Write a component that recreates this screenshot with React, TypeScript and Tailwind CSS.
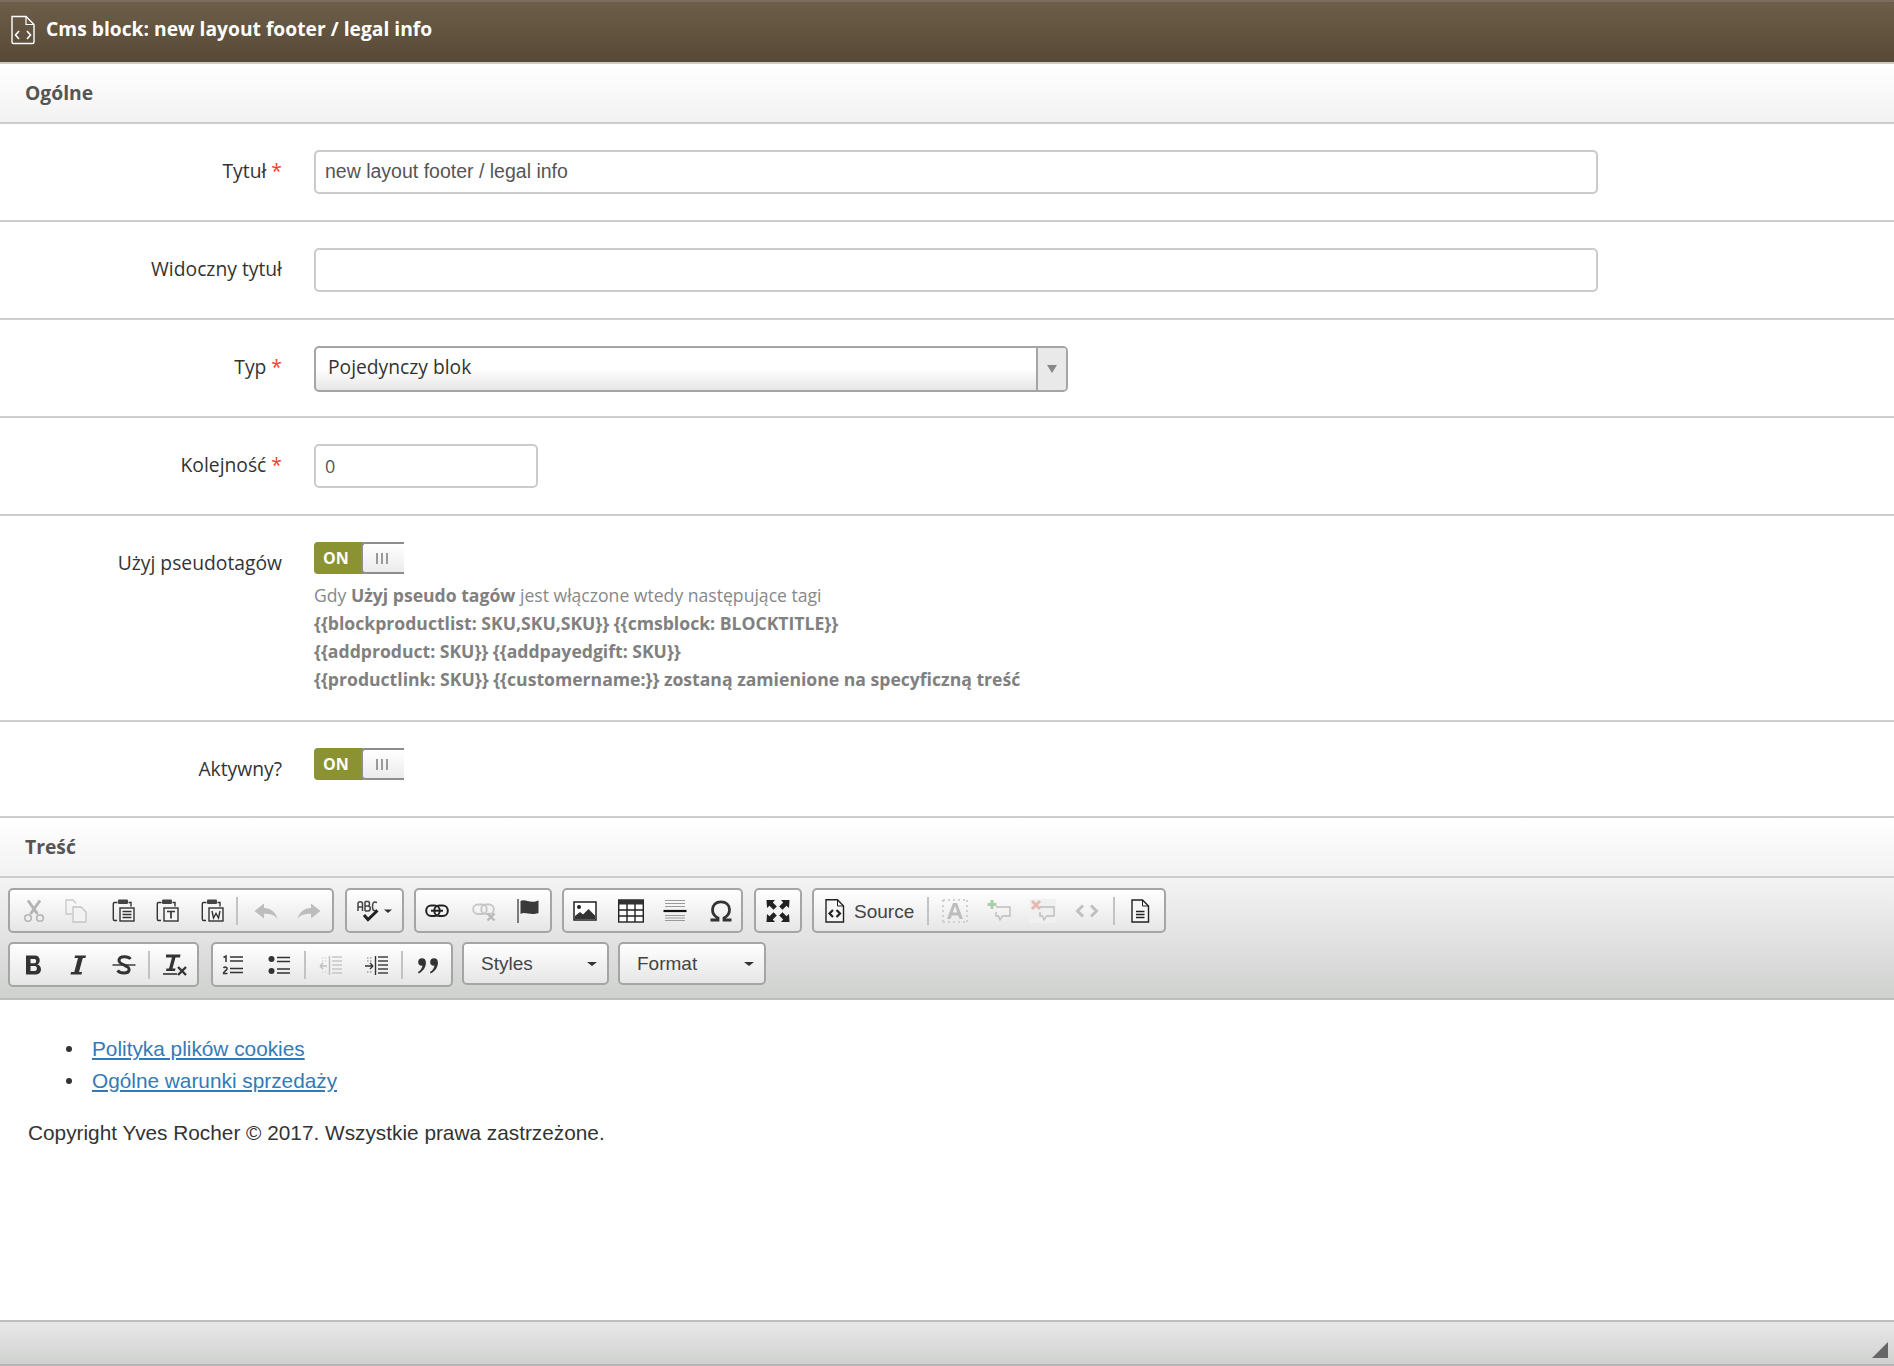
import React from "react";

const OS = "font-['Open_Sans',sans-serif]";
const LS = "font-['Liberation_Sans',Arial,sans-serif]";

const Svg = ({ children, w = 24 }: { children: React.ReactNode; w?: number }) => (
  <svg width={w} height="24" viewBox={`0 0 ${w} 24`} fill="none" className="block">
    {children}
  </svg>
);

const Clip = ({ children }: { children?: React.ReactNode }) => (
  <Svg>
    <path d="M5.5 3.5H2.5C1.5 3.5 1.3 4 1.3 5V20C1.3 21 1.5 21.5 2.5 21.5H5" stroke="#333" strokeWidth="1.4" />
    <path d="M16.5 3.5H19V7.5" stroke="#333" strokeWidth="1.4" />
    <rect x="6" y="0.5" width="10" height="4.5" rx="1" fill="#444" />
    {children}
  </Svg>
);

const icons: Record<string, React.ReactNode> = {
  cut: (
    <Svg>
      <path d="M6 1.5L15.5 15M18 1.5L8.5 15" stroke="#b4b4b4" strokeWidth="3" />
      <circle cx="6" cy="19" r="3.3" stroke="#b4b4b4" strokeWidth="1.6" />
      <circle cx="18" cy="19" r="3.3" stroke="#b4b4b4" strokeWidth="1.6" />
    </Svg>
  ),
  copy: (
    <Svg>
      <path d="M8 15H2V1H9L12 4.5" stroke="#c8c8c8" strokeWidth="1.3" />
      <path d="M9 8H17L22 13V23H9Z" stroke="#c4c4c4" strokeWidth="1.3" fill="#f2f2f2" />
    </Svg>
  ),
  paste: (
    <Clip>
      <rect x="8" y="9" width="14" height="13" stroke="#333" strokeWidth="1.4" fill="#f4f4f4" />
      <path d="M10.5 12.5H19.5M10.5 15.5H19.5M10.5 18.5H19.5" stroke="#333" strokeWidth="1.4" />
    </Clip>
  ),
  pasteT: (
    <Clip>
      <rect x="8" y="9" width="14" height="13" stroke="#333" strokeWidth="1.4" fill="#f4f4f4" />
      <path d="M11 12.5H19M15 12.5V19.5" stroke="#333" strokeWidth="1.7" />
    </Clip>
  ),
  pasteW: (
    <Clip>
      <rect x="8" y="9" width="14" height="13" stroke="#333" strokeWidth="1.4" fill="#f4f4f4" />
      <path d="M11 12L12.5 19L15 14.5L17.5 19L19 12" stroke="#333" strokeWidth="1.4" />
    </Clip>
  ),
  undo: (
    <Svg>
      <path d="M0.5 12L10 4.5V9C17 9 21.5 13 23.5 20C20 15.5 16 14.8 10 14.8V19.5Z" fill="#bdbdbd" />
    </Svg>
  ),
  redo: (
    <Svg>
      <path d="M23.5 12L14 4.5V9C7 9 2.5 13 0.5 20C4 15.5 8 14.8 14 14.8V19.5Z" fill="#bdbdbd" />
    </Svg>
  ),
  spell: (
    <Svg w={36}>
      <path d="M1 12V4.5C1 2 5.5 2 5.5 4.5V12M1 8H5.5" stroke="#444" strokeWidth="1.5" />
      <path d="M8 2.5V12M8 2.5H11C13 2.5 13 7 11 7H8M11 7C14 7 14 12 11 12H8" stroke="#444" strokeWidth="1.5" />
      <path d="M20 3.5C16 1.5 15.5 5 15.5 7.5C15.5 10 16 13 20 11" stroke="#444" strokeWidth="1.5" />
      <path d="M7 16L11 20.5L20.5 11.5" stroke="#222" strokeWidth="3" />
      <path d="M27 10.5H35L31 14Z" fill="#333" />
    </Svg>
  ),
  link: (
    <Svg>
      <rect x="1.2" y="6.5" width="13.5" height="10.5" rx="5" stroke="#222" strokeWidth="2" />
      <rect x="9.3" y="6.5" width="13.5" height="10.5" rx="5" stroke="#222" strokeWidth="2" />
      <path d="M6 11.7H18" stroke="#222" strokeWidth="2" />
    </Svg>
  ),
  unlink: (
    <Svg>
      <rect x="1.2" y="5.5" width="13.5" height="9.5" rx="4.5" stroke="#c6c6c6" strokeWidth="1.8" />
      <rect x="9.3" y="5.5" width="12.5" height="9.5" rx="4.5" stroke="#c6c6c6" strokeWidth="1.8" />
      <path d="M15.5 14.5L22.5 21.5M22.5 14.5L15.5 21.5" stroke="#b8b8b8" strokeWidth="2.4" />
    </Svg>
  ),
  flag: (
    <Svg>
      <path d="M2 0V24" stroke="#555" strokeWidth="1.5" />
      <path d="M4.5 2C9 -0.5 14 5 22.5 1.5V14C14 17 9 12 4.5 15Z" fill="#3a3a3a" />
    </Svg>
  ),
  image: (
    <Svg>
      <rect x="1" y="3" width="22" height="18" stroke="#222" strokeWidth="1.5" fill="#fff" />
      <circle cx="6" cy="8" r="2" fill="#222" />
      <path d="M2 20V17L7 13L10 15.5L15.5 10L22 16.5V20Z" fill="#333" />
    </Svg>
  ),
  table: (
    <Svg w={26}>
      <rect x="0.7" y="1" width="24.6" height="22" stroke="#222" strokeWidth="1.4" fill="#fff" />
      <rect x="0.7" y="1" width="24.6" height="4.5" fill="#333" />
      <path d="M9 5V23M17 5V23M1 11H25M1 17H25" stroke="#222" strokeWidth="1.4" />
    </Svg>
  ),
  hr: (
    <Svg>
      <path d="M2 1.5H22M2 4.5H22M2 7.5H22M2 16.5H22M2 19H22M2 21.5H22" stroke="#9a9a9a" strokeWidth="1.1" />
      <path d="M0.5 12H23.5" stroke="#111" strokeWidth="2.2" />
    </Svg>
  ),
  omega: (
    <Svg>
      <path
        d="M1.5 21H9V19C5.5 17.3 3.5 14.5 3.5 10.8C3.5 5.8 7 2.8 12 2.8C17 2.8 20.5 5.8 20.5 10.8C20.5 14.5 18.5 17.3 15 19V21H22.5"
        stroke="#333"
        strokeWidth="2.8"
      />
    </Svg>
  ),
  max: (
    <Svg>
      <path d="M0.5 1H9L6.8 3.5L10.8 7.5L7.5 10.8L3.5 6.8L1 9Z" fill="#222" />
      <path d="M23.5 1H15L17.2 3.5L13.2 7.5L16.5 10.8L20.5 6.8L23 9Z" fill="#222" />
      <path d="M0.5 23H9L6.8 20.5L10.8 16.5L7.5 13.2L3.5 17.2L1 15Z" fill="#222" />
      <path d="M23.5 23H15L17.2 20.5L13.2 16.5L16.5 13.2L20.5 17.2L23 15Z" fill="#222" />
    </Svg>
  ),
  source: (
    <Svg>
      <path d="M3 0.8H14.5L20.5 7V23H3Z" stroke="#222" strokeWidth="1.4" fill="#f6f6f6" />
      <path d="M14.5 0.8V7H20.5" stroke="#222" strokeWidth="1" />
      <path d="M10 11L6.5 14.5L10 18M13.5 11L17 14.5L13.5 18" stroke="#222" strokeWidth="2.2" />
    </Svg>
  ),
  a: (
    <Svg w={26}>
      <path d="M1 1H25M1 23H25M1 1V23M25 1V23" stroke="#cfcfcf" strokeWidth="2" strokeDasharray="2 3" />
      <path d="M5 20L11 4H15L21 20H17.5L16.3 16.5H9.7L8.5 20ZM10.7 13.5H15.3L13 7Z" fill="#bdbdbd" />
    </Svg>
  ),
  cadd: (
    <Svg>
      <path d="M9 8H23V17H15.5L13 21L11.5 17H9V13" stroke="#bdbdbd" strokeWidth="1.4" />
      <path d="M0.5 5.5H9.5M5 1V10" stroke="#a9cfa9" strokeWidth="2.8" />
    </Svg>
  ),
  cdel: (
    <Svg w={26}>
      <rect x="0" y="0" width="26" height="24" fill="#f0f0f0" />
      <path d="M10 8H24V17H16.5L14 21L12.5 17H10V13" stroke="#bdbdbd" strokeWidth="1.4" />
      <path d="M2 2L10 10M10 2L2 10" stroke="#e8b8b0" strokeWidth="3" />
    </Svg>
  ),
  code: (
    <Svg>
      <path d="M8 6.5L2.5 12L8 17.5M16 6.5L21.5 12L16 17.5" stroke="#c0c0c0" strokeWidth="3" />
    </Svg>
  ),
  preview: (
    <Svg>
      <path d="M4 1H14.5L20.5 7V23H4Z" stroke="#222" strokeWidth="1.4" fill="#f6f6f6" />
      <path d="M14.5 1V7H20.5" stroke="#222" strokeWidth="1" />
      <path d="M8 12.5H16.5M8 15.5H16.5M8 18.5H16.5" stroke="#222" strokeWidth="1.4" />
    </Svg>
  ),
  bold: (
    <Svg>
      <path
        d="M4 2.5H13C19 2.5 19 10.7 15 11.5C20.5 12 20.5 21.5 14 21.5H4ZM8.5 6V10.2H12.5C14.8 10.2 14.8 6 12.5 6ZM8.5 13V18H13C15.5 18 15.5 13 13 13Z"
        fill="#333"
        fillRule="evenodd"
      />
    </Svg>
  ),
  italic: (
    <Svg>
      <path d="M9 2.5H20L19.5 5H16.8L13 19H16L15.5 21.5H4.5L5 19H8.3L12 5H8.5Z" fill="#333" />
    </Svg>
  ),
  strike: (
    <Svg>
      <path d="M18.5 6C16.5 3 7.5 2.5 7 7C6.7 10.5 11 11.5 13 12.5C16.5 14 17.5 15 17 17.5C16 21 8 20.5 5.5 17.5" stroke="#333" strokeWidth="3" />
      <path d="M0.5 12H23.5" stroke="#333" strokeWidth="1.4" />
    </Svg>
  ),
  clear: (
    <Svg w={26}>
      <path d="M4 1.5H18.5L18 4.5H13.5L10.5 15.5H13.5L13 18H4L4.5 15.5H7L10 4.5H4Z" fill="#333" />
      <path d="M1 21H15" stroke="#333" strokeWidth="1.6" />
      <path d="M16 14L24 22M24 14L16 22" stroke="#333" strokeWidth="2.4" />
    </Svg>
  ),
  ol: (
    <Svg>
      <path d="M2.5 4.5L5 3V9" stroke="#333" strokeWidth="1.5" />
      <path d="M2.5 15C3.5 13.5 6.5 14 6 16C5.5 17.5 2.5 18 2.5 20.5H6.5" stroke="#333" strokeWidth="1.5" />
      <path d="M9 4H22M9 8H22M9 15.5H22M9 19.5H22" stroke="#333" strokeWidth="1.6" />
    </Svg>
  ),
  ul: (
    <Svg>
      <circle cx="4.5" cy="6" r="3" fill="#333" />
      <circle cx="4.5" cy="18" r="3" fill="#333" />
      <path d="M10 4.5H23M10 8.5H23M10 16H23M10 20H23" stroke="#333" strokeWidth="1.6" />
    </Svg>
  ),
  outdent: (
    <Svg>
      <path d="M1 13H8M1 13L4 10M1 13L4 16" stroke="#bdbdbd" strokeWidth="1.4" />
      <path d="M10.5 3V22" stroke="#bbb" strokeWidth="1.4" />
      <path d="M13 4H23M13 8H23M13 12H23M13 16H23M13 20H23" stroke="#c6c6c6" strokeWidth="1.3" />
      <path d="M3 5H8M3 8H8M3 19H8" stroke="#ccc" strokeWidth="1" strokeDasharray="1.5 1.5" />
    </Svg>
  ),
  indent: (
    <Svg>
      <path d="M0 13H8M8 13L5 10M8 13L5 16" stroke="#333" strokeWidth="1.4" />
      <path d="M10.5 3V22" stroke="#333" strokeWidth="1.4" />
      <path d="M13 4H23M13 8H23M13 12H23M13 16H23M13 20H23" stroke="#444" strokeWidth="1.3" />
      <path d="M2 5H8M2 8H8M2 19H8" stroke="#777" strokeWidth="1" strokeDasharray="1.5 1.5" />
    </Svg>
  ),
  quote: (
    <Svg>
      <circle cx="6" cy="9" r="3.8" fill="#333" />
      <path d="M9.8 9C10.3 14 7 18.5 2.5 20.5L2 19C4.5 17.5 6.5 14.5 6.5 12Z" fill="#333" />
      <circle cx="18" cy="9" r="3.8" fill="#333" />
      <path d="M21.8 9C22.3 14 19 18.5 14.5 20.5L14 19C16.5 17.5 18.5 14.5 18.5 12Z" fill="#333" />
    </Svg>
  ),
};

const Btn = ({ i, w = "w-[44px]", className = "" }: { i: string; w?: string; className?: string }) => (
  <div className={`${w} h-[41px] flex items-center justify-center shrink-0 ${className}`}>{icons[i]}</div>
);

const Sep = ({ className = "mx-[4px]" }: { className?: string }) => (
  <div className={`w-[2px] h-[28px] bg-[#c3c3c3] shrink-0 ${className}`} />
);

const Group = ({ children, className = "" }: { children: React.ReactNode; className?: string }) => (
  <div className={`h-[45px] flex items-center border-2 border-[#a5a5a5] rounded-[5px] bg-gradient-to-b from-white to-[#e6e6e6] pl-[2px] ${className || "pr-[2px]"}`}>
    {children}
  </div>
);

const Combo = ({ label, w }: { label: string; w: string }) => (
  <div className={`${w} h-[43px] self-start flex items-center justify-between border-2 border-[#a5a5a5] rounded-[5px] bg-gradient-to-b from-white to-[#e6e6e6] pl-[17px] pr-[10px]`}>
    <span className={`${LS} text-[19px] text-[#444] mt-[1px]`}>{label}</span>
    <span className="w-0 h-0 border-x-[5px] border-x-transparent border-t-[4px] border-t-[#333]" />
  </div>
);

const Row = ({ label, req, children, h = "h-[98px]" }: { label: string; req?: boolean; children: React.ReactNode; h?: string }) => (
  <div className={`${h} border-b-2 border-[#cdcdcd] flex items-start pt-[26px]`}>
    <div className="w-[282px] shrink-0 text-right text-[19.3px] leading-[42px] text-[#333]">
      {label}
      {req && <span className="text-[#ff3c2f]"> *</span>}
    </div>
    <div className="ml-[32px] flex-1">{children}</div>
  </div>
);

const Section = ({ title }: { title: string }) => (
  <div className="h-[60px] border-b-2 border-[#cdcdcd] bg-gradient-to-b from-white to-[#f2f2f2] flex items-center pl-[25px] text-[19.3px] font-bold text-[#555]">
    {title}
  </div>
);

const Toggle = () => (
  <div className="w-[90px] h-[32px] flex rounded-l-[4px] overflow-hidden">
    <div className="w-[49px] bg-[#8a9232] text-white font-bold text-[16px] leading-[32px] pl-[9px]">ON</div>
    <div className="flex-1 -ml-[2px] rounded-l-[4px] border-y-2 border-l-2 border-[#8d8d8d] bg-gradient-to-b from-white to-[#ebebeb] flex items-center justify-center gap-[3px] pr-[4px]">
      <span className="w-[2px] h-[11px] bg-[#999]" />
      <span className="w-[2px] h-[11px] bg-[#999]" />
      <span className="w-[2px] h-[11px] bg-[#999]" />
    </div>
  </div>
);

const inputCls =
  "block h-[44px] rounded-[5px] border-2 border-[#cbcbcb] bg-white outline-none px-[9px] text-[#555]";

const Bullet = () => <span className="w-[6px] h-[6px] rounded-full bg-[#333] -ml-[26px] mr-[20px] shrink-0" />;

export default function App() {
  return (
    <div className={`${OS} w-[1894px] h-[1366px] overflow-hidden bg-white flex flex-col`}>
      <div className="h-[64px] shrink-0 border-t-2 border-t-[#7b6d5b] border-b-2 border-b-[#cfccc6] bg-gradient-to-b from-[#6c5e49] to-[#574935] flex items-center pl-[10px]">
        <svg width="26" height="30" viewBox="0 0 26 30" fill="none" className="-mt-[5px]">
          <path d="M2 1.5H16L24 9.5V27C24 28 23.5 28.5 22.5 28.5H3.5C2.5 28.5 2 28 2 27Z" stroke="#fff" strokeWidth="1.4" />
          <path d="M16 1.5V9.5H24" stroke="#fff" strokeWidth="1.2" />
          <path d="M9 16L5.5 20L9 24M17 16L20.5 20L17 24" stroke="#fff" strokeWidth="1.6" />
        </svg>
        <span className="ml-[10px] -mt-[5px] text-white font-bold text-[19.25px]">Cms block: new layout footer / legal info</span>
      </div>

      <Section title="Ogólne" />

      <Row label="Tytuł" req>
        <input readOnly value="new layout footer / legal info" className={`${inputCls} ${LS} w-[1284px] text-[19.5px] pb-[2px]`} />
      </Row>
      <Row label="Widoczny tytuł">
        <input readOnly value="" className={`${inputCls} w-[1284px] text-[19px]`} />
      </Row>
      <Row label="Typ" req>
        <div className="w-[754px] h-[46px] flex rounded-[5px] border-2 border-[#a5a5a5] bg-gradient-to-b from-white from-50% to-[#e6e6e6] overflow-hidden">
          <div className="flex-1 pl-[12px] text-[19.25px] leading-[38px] text-[#333]">Pojedynczy blok</div>
          <div className="w-[30px] border-l-2 border-[#a5a5a5] bg-[#e9e9e9] flex items-center justify-center">
            <span className="w-0 h-0 border-x-[5px] border-x-transparent border-t-[8px] border-t-[#888]" />
          </div>
        </div>
      </Row>
      <Row label="Kolejność" req>
        <input readOnly value="0" className={`${inputCls} ${OS} w-[224px] text-[18px]`} />
      </Row>
      <Row label="Użyj pseudotagów" h="h-[206px]">
        <Toggle />
        <div className="mt-[7px] text-[17.6px] leading-[28px] text-[#888]">
          <div>
            Gdy <b className="text-[#808080]">Użyj pseudo tagów</b> jest włączone wtedy następujące tagi
          </div>
          <div className="font-bold text-[#808080]">{"{{blockproductlist: SKU,SKU,SKU}} {{cmsblock: BLOCKTITLE}}"}</div>
          <div className="font-bold text-[#808080]">{"{{addproduct: SKU}} {{addpayedgift: SKU}}"}</div>
          <div className="font-bold text-[#808080]">{"{{productlink: SKU}} {{customername:}} zostaną zamienione na specyficzną treść"}</div>
        </div>
      </Row>
      <Row label="Aktywny?" h="h-[96px]">
        <Toggle />
      </Row>

      <Section title="Treść" />

      <div className="h-[122px] shrink-0 border-b-2 border-[#bdbdbd] bg-gradient-to-b from-[#f4f4f4] to-[#cfd1cf] pl-[8px] pt-[10px] flex flex-col gap-[9px]">
        <div className="flex gap-[11px]">
          <Group>
            <Btn i="cut" />
            <Btn i="copy" className="pr-[4px]" />
            <Btn i="paste" className="pl-[4px]" />
            <Btn i="pasteT" className="pl-[4px]" />
            <Btn i="pasteW" className="pl-[6px]" />
            <Sep />
            <Btn i="undo" className="pl-[4px]" />
            <Btn i="redo" className="pl-[2px]" />
          </Group>
          <Group className="pr-[2px] mr-[-1px]">
            <Btn i="spell" w="w-[51px]" />
          </Group>
          <Group className="pr-[2px] mr-[-1px]">
            <Btn i="link" w="w-[44px]" className="pr-[6px]" />
            <Btn i="unlink" w="w-[43px]" />
            <Btn i="flag" w="w-[43px]" className="pl-[2px]" />
          </Group>
          <Group>
            <Btn i="image" w="w-[43px]" className="pr-[5px]" />
            <Btn i="table" w="w-[44px]" />
            <Btn i="hr" w="w-[43px]" />
            <Btn i="omega" w="w-[43px]" className="pl-[7px]" />
          </Group>
          <Group className="pr-[2px] mr-[-1px]">
            <Btn i="max" w="w-[40px]" />
          </Group>
          <Group>
            <div className="w-[111px] h-[41px] flex items-center pl-[7px] shrink-0">
              {icons.source}
              <span className={`${LS} ml-[7px] mt-[3px] text-[19px] text-[#444]`}>Source</span>
            </div>
            <Sep className="mr-[4px]" />
            <Btn i="a" />
            <Btn i="cadd" />
            <Btn i="cdel" />
            <Btn i="code" />
            <Sep className="ml-[4px] mr-[3px]" />
            <Btn i="preview" />
          </Group>
        </div>
        <div className="flex gap-[9px]">
          <Group className="pr-[2px] mr-[3px]">
            <Btn i="bold" />
            <Btn i="italic" />
            <Btn i="strike" className="pl-[4px]" />
            <Sep />
            <Btn i="clear" w="w-[41px]" />
          </Group>
          <Group className="pr-0">
            <Btn i="ol" w="w-[36px]" />
            <Btn i="ul" className="ml-[6px]" />
            <Sep className="mx-[3px]" />
            <Btn i="outdent" />
            <Btn i="indent" className="ml-[2px]" />
            <Sep className="mx-[2px]" />
            <Btn i="quote" w="w-[46px]" />
          </Group>
          <Combo label="Styles" w="w-[147px]" />
          <Combo label="Format" w="w-[148px]" />
        </div>
      </div>

      <div className={`${LS} flex-1 px-[28px] text-[20.8px] leading-[32px] text-[#333]`}>
        <ul className="pl-[64px] mt-[33px]">
          <li className="flex items-center">
            <Bullet />
            <a className="text-[#337ab7] underline">Polityka plików cookies</a>
          </li>
          <li className="flex items-center">
            <Bullet />
            <a className="text-[#337ab7] underline">Ogólne warunki sprzedaży</a>
          </li>
        </ul>
        <p className="mt-[20px]">Copyright Yves Rocher © 2017. Wszystkie prawa zastrzeżone.</p>
      </div>

      <div className="h-[46px] shrink-0 border-t-2 border-t-[#bdbdbd] border-b-2 border-b-[#b5b5b5] bg-gradient-to-b from-[#e8e8e8] to-[#cfd1cf] flex items-end justify-end pr-[6px] pb-[6px]">
        <svg width="16" height="16" viewBox="0 0 16 16">
          <path d="M16 0V16H0Z" fill="#666" />
        </svg>
      </div>
    </div>
  );
}
